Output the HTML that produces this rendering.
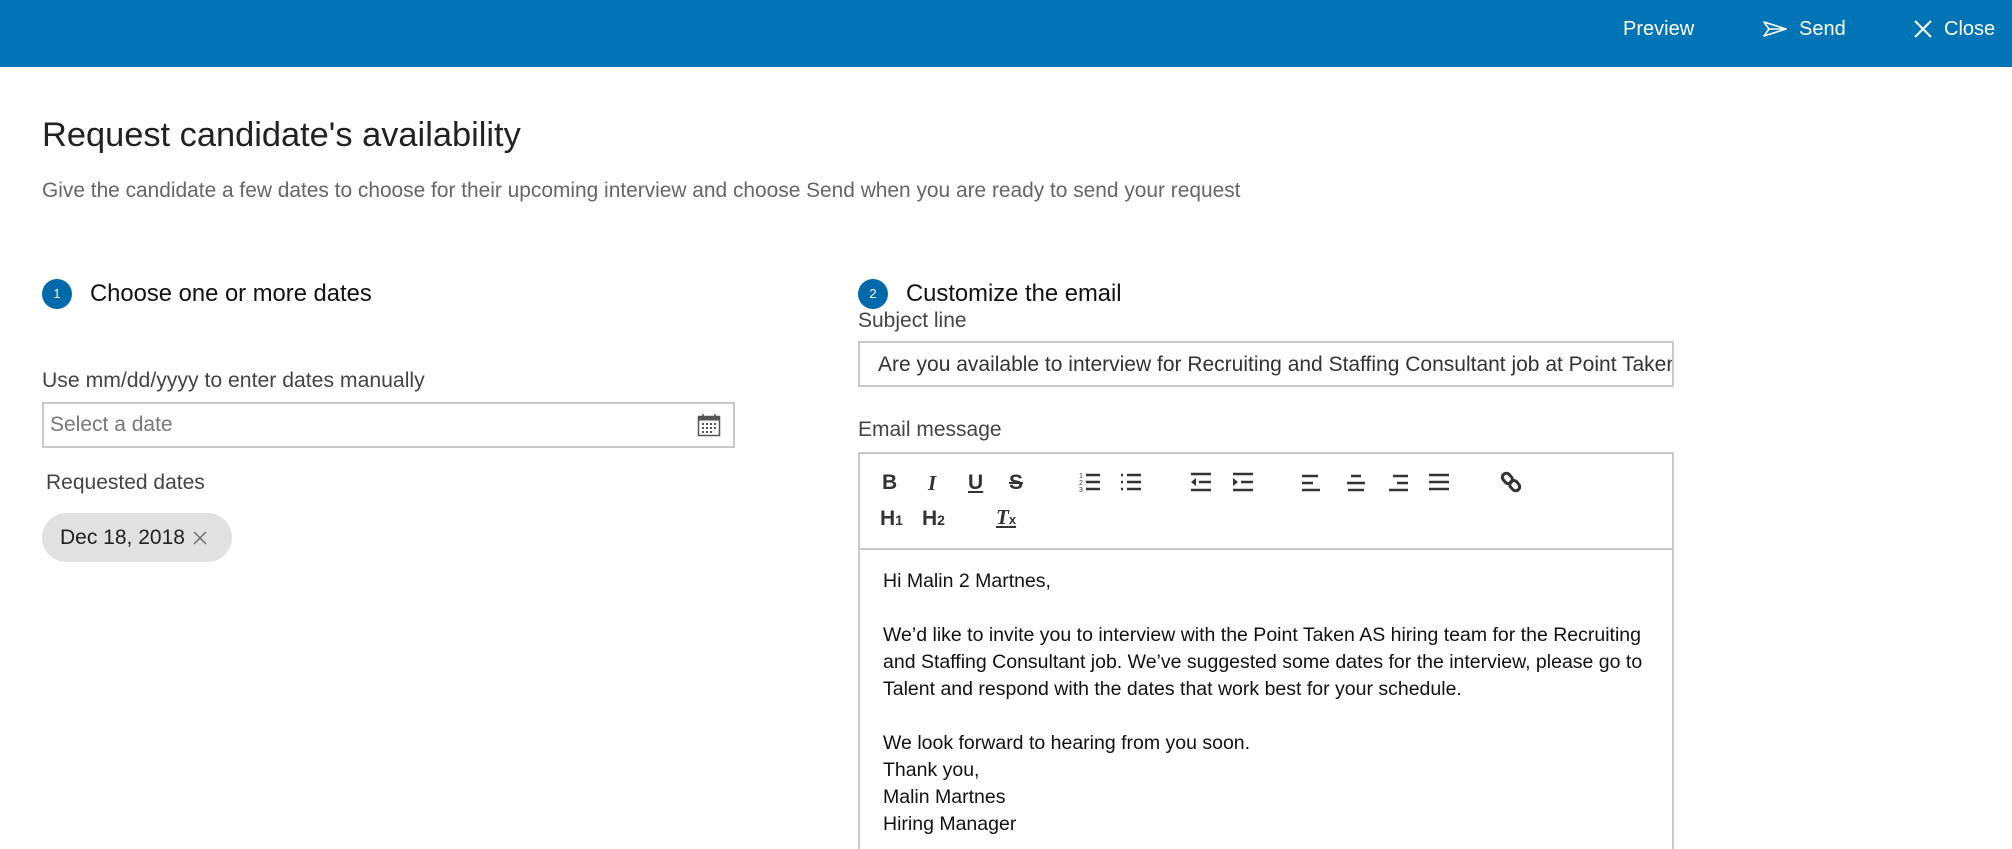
<!DOCTYPE html>
<html><head><meta charset="utf-8"><style>
*{margin:0;padding:0;box-sizing:border-box}
html,body{width:2012px;height:849px;overflow:hidden}
body{background:#fff;font-family:"Liberation Sans",sans-serif;color:#222;position:relative}
.a{position:absolute;white-space:nowrap}
.hdr{position:absolute;left:0;top:0;width:2012px;height:67px;background:#0074b4}
.ht{color:#fff;font-size:20px;top:18px}
.circ{width:30px;height:30px;border-radius:50%;background:#0069ab;color:#fff;font-size:13px;text-align:center;line-height:30px}
.tb{position:absolute;color:#333;font-weight:bold;font-size:21px;line-height:22px}
.body p{font-size:19.5px;line-height:27px;color:#111}
</style></head><body>
<div class="hdr"></div>
<div class="a ht" style="left:1623px">Preview</div>
<svg class="a" style="left:1762px;top:20px" width="26" height="18" viewBox="0 0 26 18"><path d="M2 2 L24 9 L2 16 L7 9 Z M7 9 H24" fill="none" stroke="#fff" stroke-width="1.6" stroke-linejoin="round"/></svg>
<div class="a ht" style="left:1799px">Send</div>
<svg class="a" style="left:1913px;top:19px" width="20" height="20" viewBox="0 0 20 20"><path d="M2 2 L18 18 M18 2 L2 18" stroke="#fff" stroke-width="2"/></svg>
<div class="a ht" style="left:1944px">Close</div>

<div class="a" style="left:42px;top:116px;font-size:34.4px;color:#222">Request candidate's availability</div>
<div class="a" style="left:42px;top:179px;font-size:20.9px;color:#666">Give the candidate a few dates to choose for their upcoming interview and choose Send when you are ready to send your request</div>

<div class="a circ" style="left:42px;top:279px">1</div>
<div class="a" style="left:90px;top:280px;font-size:23.8px;color:#111">Choose one or more dates</div>
<div class="a" style="left:42px;top:369px;font-size:21.2px;color:#444">Use mm/dd/yyyy to enter dates manually</div>
<div class="a" style="left:42px;top:402px;width:693px;height:46px;border:2px solid #c8c8c8"></div>
<div class="a" style="left:50px;top:413px;font-size:21px;color:#777">Select a date</div>
<svg class="a" style="left:697px;top:413px" width="24" height="24" viewBox="0 0 24 24"><rect x="1.5" y="3.5" width="21" height="19" fill="none" stroke="#555" stroke-width="1.5"/><rect x="1.5" y="3.5" width="21" height="4" fill="#555"/><path d="M6 1v4M18 1v4" stroke="#555" stroke-width="1.5"/><g fill="#555"><rect x="5" y="10" width="2" height="2"/><rect x="9" y="10" width="2" height="2"/><rect x="13" y="10" width="2" height="2"/><rect x="17" y="10" width="2" height="2"/><rect x="5" y="14" width="2" height="2"/><rect x="9" y="14" width="2" height="2"/><rect x="13" y="14" width="2" height="2"/><rect x="17" y="14" width="2" height="2"/><rect x="5" y="18" width="2" height="2"/><rect x="9" y="18" width="2" height="2"/><rect x="13" y="18" width="2" height="2"/></g></svg>
<div class="a" style="left:46px;top:471px;font-size:21px;color:#444">Requested dates</div>
<div class="a" style="left:42px;top:513px;width:190px;height:49px;border-radius:25px;background:#e1e1e1"></div>
<div class="a" style="left:60px;top:526px;font-size:21px;color:#222">Dec 18, 2018</div>
<svg class="a" style="left:193px;top:531px" width="14" height="14" viewBox="0 0 14 14"><path d="M1 1L13 13M13 1L1 13" stroke="#666" stroke-width="1.3"/></svg>

<div class="a circ" style="left:858px;top:279px">2</div>
<div class="a" style="left:906px;top:280px;font-size:23.8px;color:#111">Customize the email</div>
<div class="a" style="left:858px;top:309px;font-size:21px;color:#444">Subject line</div>
<div class="a" style="left:858px;top:341px;width:816px;height:46px;border:2px solid #c8c8c8;overflow:hidden"><div style="position:absolute;left:18px;top:10px;font-size:21px;color:#333;white-space:nowrap">Are you available to interview for Recruiting and Staffing Consultant job at Point Taken AS?</div></div>
<div class="a" style="left:858px;top:418px;font-size:21px;color:#444">Email message</div>
<div class="a" style="left:858px;top:452px;width:816px;height:420px;border:2px solid #c8c8c8"></div>
<div class="a" style="left:860px;top:548px;width:812px;height:2px;background:#c8c8c8"></div>

<div class="tb" style="left:882px;top:472px">B</div>
<div class="tb" style="left:928px;top:472px;font-family:'Liberation Serif',serif;font-style:italic">I</div>
<div class="tb" style="left:968px;top:472px;text-decoration:underline">U</div>
<div class="tb" style="left:1009px;top:472px;text-decoration:line-through">S</div>
<svg class="a" style="left:1079px;top:471px" width="22" height="22" viewBox="0 0 22 22"><g stroke="#333" stroke-width="2.4"><path d="M7 4H21M7 11H21M7 18H21"/></g><text x="0" y="7" font-size="7" font-family="Liberation Sans" fill="#333">1</text><text x="0" y="14" font-size="7" font-family="Liberation Sans" fill="#333">2</text><text x="0" y="21" font-size="7" font-family="Liberation Sans" fill="#333">3</text></svg>
<svg class="a" style="left:1120px;top:471px" width="22" height="22" viewBox="0 0 22 22"><g stroke="#333" stroke-width="2.4"><path d="M1 4H3M1 11H3M1 18H3M7 4H21M7 11H21M7 18H21"/></g></svg>
<svg class="a" style="left:1190px;top:471px" width="22" height="22" viewBox="0 0 22 22"><g stroke="#333" stroke-width="2.4"><path d="M1 3H21M9 11H21M1 19H21"/></g><path d="M1 11L6 7V15Z" fill="#333"/></svg>
<svg class="a" style="left:1232px;top:471px" width="22" height="22" viewBox="0 0 22 22"><g stroke="#333" stroke-width="2.4"><path d="M1 3H21M9 11H21M1 19H21"/></g><path d="M6 11L1 7V15Z" fill="#333"/></svg>
<svg class="a" style="left:1301px;top:471px" width="22" height="22" viewBox="0 0 22 22"><g stroke="#333" stroke-width="2.4"><path d="M1 5H17M1 12H12M1 19H19"/></g></svg>
<svg class="a" style="left:1345px;top:471px" width="22" height="22" viewBox="0 0 22 22"><g stroke="#333" stroke-width="2.4"><path d="M6 5H16M2 12H20M3 19H19"/></g></svg>
<svg class="a" style="left:1387px;top:471px" width="22" height="22" viewBox="0 0 22 22"><g stroke="#333" stroke-width="2.4"><path d="M6 5H21M10 12H21M2 19H21"/></g></svg>
<svg class="a" style="left:1428px;top:471px" width="22" height="22" viewBox="0 0 22 22"><g stroke="#333" stroke-width="2.4"><path d="M1 4H21M1 11H21M1 18H21"/></g></svg>
<svg class="a" style="left:1500px;top:471px" width="22" height="22" viewBox="0 0 22 22"><g fill="none" stroke="#333" stroke-width="3"><rect x="3" y="2" width="8" height="11" rx="4" transform="rotate(-40 7 7)"/><rect x="11" y="9" width="8" height="11" rx="4" transform="rotate(-40 15 15)"/></g></svg>
<div class="tb" style="left:880px;top:508px">H<span style="font-size:14px">1</span></div>
<div class="tb" style="left:922px;top:508px">H<span style="font-size:14px">2</span></div>
<div class="tb" style="left:996px;top:506px;font-family:'Liberation Serif',serif;font-style:italic;text-decoration:underline">T<span style="font-size:13px;font-family:'Liberation Sans';font-style:normal;text-decoration:none">x</span></div>

<div class="a body" style="left:883px;top:568px">
<p>Hi Malin 2 Martnes,</p><p>&nbsp;</p>
<p>We’d like to invite you to interview with the Point Taken AS hiring team for the Recruiting</p>
<p>and Staffing Consultant job. We’ve suggested some dates for the interview, please go to</p>
<p>Talent and respond with the dates that work best for your schedule.</p><p>&nbsp;</p>
<p>We look forward to hearing from you soon.</p>
<p>Thank you,</p><p>Malin Martnes</p><p>Hiring Manager</p>
</div>
</body></html>
